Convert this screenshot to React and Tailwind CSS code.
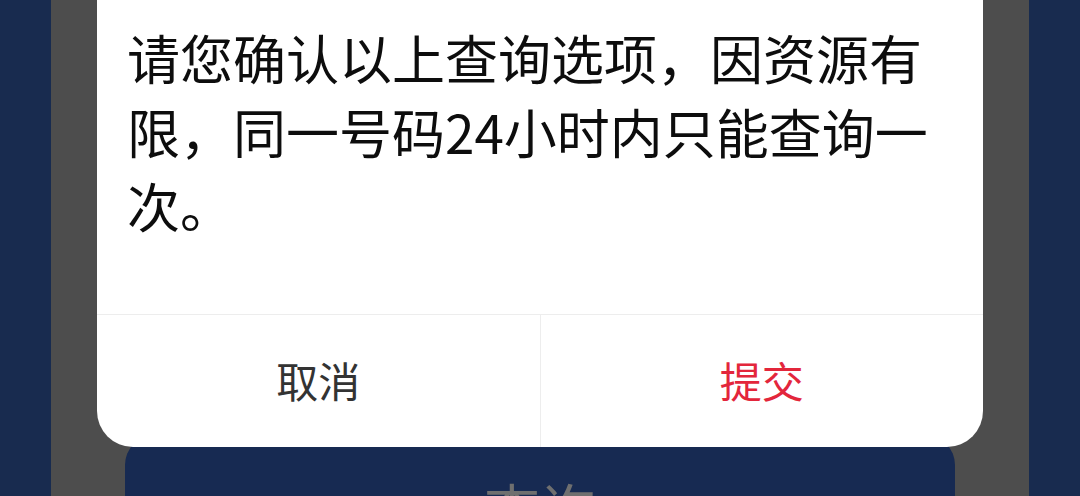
export default function App() {
  return (
    <div
      className="w-full h-[496px] overflow-hidden bg-[#182b4f] px-[51px]"
      style={{ fontFamily: '"Noto Sans CJK SC", "Noto Sans", sans-serif' }}
    >
      <div className="h-full bg-[#4d4d4d] flex flex-col">
        {/* confirm dialog */}
        <div className="relative z-10 mx-[46px] bg-white rounded-b-[36px]">
          <div className="pl-[30px] pr-[30px] pt-[20px] pb-[72px] text-[53px] leading-[74px] text-[#0d0d0d]">
            请您确认以上查询选项，因资源有限，同一号码24小时内只能查询一次。
          </div>
          <div className="flex h-[133px] border-t border-[#ededed]">
            <button className="flex-1 flex items-center justify-center pb-[4px] text-[42px] text-[#333333]">
              取消
            </button>
            <div className="w-px bg-[#ededed]"></div>
            <button className="flex-1 flex items-center justify-center pb-[4px] text-[42px] text-[#e3263b]">
              提交
            </button>
          </div>
        </div>

        {/* page button under the dialog */}
        <div className="-mt-[12px] mx-[74px] h-[140px] rounded-[30px] bg-[#172a52] flex justify-center pt-[44px]">
          <span className="text-[56px] leading-[56px] text-[#6f6f6f]">查询</span>
        </div>
      </div>
    </div>
  );
}
